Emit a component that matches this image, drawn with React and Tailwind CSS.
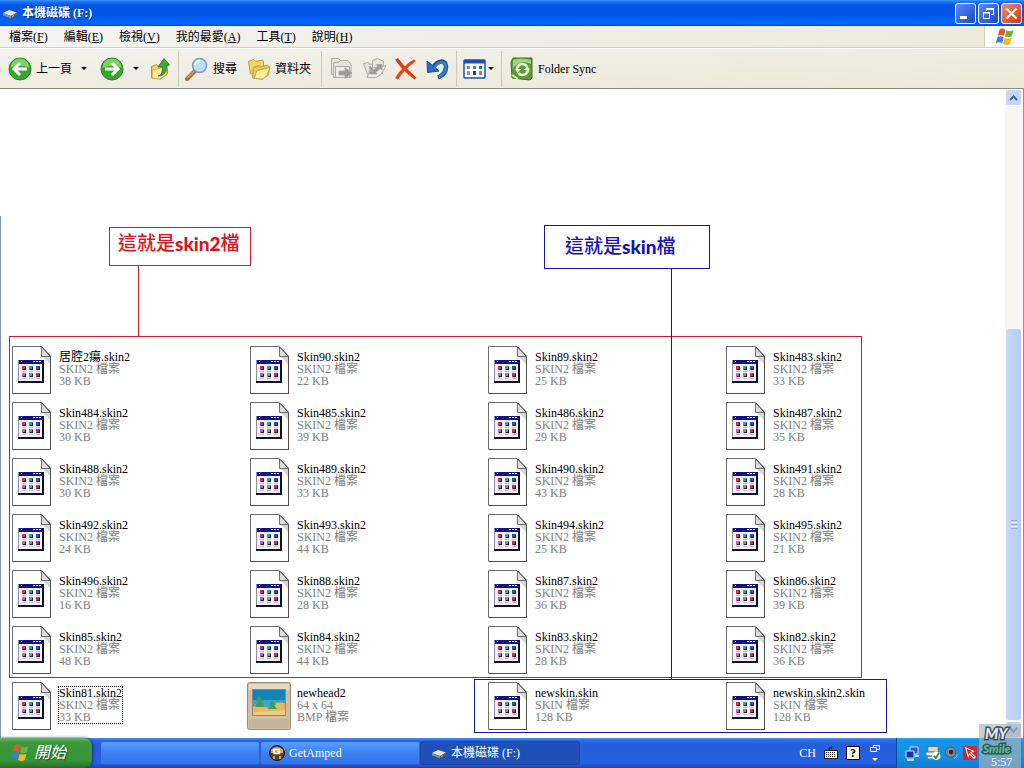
import { Fragment } from 'react';

const menus = [
  { label: '檔案', hotkey: 'F' },
  { label: '編輯', hotkey: 'E' },
  { label: '檢視', hotkey: 'V' },
  { label: '我的最愛', hotkey: 'A' },
  { label: '工具', hotkey: 'T' },
  { label: '說明', hotkey: 'H' },
];

const skin2 = (name, size) => ({ name: `${name}.skin2`, lines: ['SKIN2 檔案', `${size} KB`] });

const files = [
  skin2('居腔2瘍', 38),
  skin2('Skin90', 22),
  skin2('Skin89', 25),
  skin2('Skin483', 33),
  skin2('Skin484', 30),
  skin2('Skin485', 39),
  skin2('Skin486', 29),
  skin2('Skin487', 35),
  skin2('Skin488', 30),
  skin2('Skin489', 33),
  skin2('Skin490', 43),
  skin2('Skin491', 28),
  skin2('Skin492', 24),
  skin2('Skin493', 44),
  skin2('Skin494', 25),
  skin2('Skin495', 21),
  skin2('Skin496', 16),
  skin2('Skin88', 28),
  skin2('Skin87', 36),
  skin2('Skin86', 39),
  skin2('Skin85', 48),
  skin2('Skin84', 44),
  skin2('Skin83', 28),
  skin2('Skin82', 36),
  { ...skin2('Skin81', 33), focused: true },
  { name: 'newhead2', lines: ['64 x 64', 'BMP 檔案'], image: true },
  { name: 'newskin.skin', lines: ['SKIN 檔案', '128 KB'] },
  { name: 'newskin.skin2.skin', lines: ['SKIN 檔案', '128 KB'] },
];

const dots = [
  [10, 20, '#c03444'],
  [17, 20, '#2a9cac'],
  [24, 20, '#2c4cbc'],
  [10, 27, '#c05cc0'],
  [17, 27, '#7ca43c'],
  [24, 27, '#c03444'],
];

function FileIcon() {
  return (
    <svg width="39" height="48" viewBox="0 0 39 48" aria-hidden="true">
      <path d="M.5.5h29l9 9.5v37.500H.5z" fill="#fff" stroke="#6e6e6e" />
      <path d="M30 10.500V2l8 8.500z" fill="#dedede" />
      <path d="M29.500 1v9.500h9" fill="none" stroke="#6e6e6e" />
      <path d="M29.500 1l9 9.500v37H1" fill="none" stroke="#505050" />
      <path d="M31 11h7v7z" fill="#d6d6d6" />
      <rect x="6" y="14" width="26" height="23" fill="#101020" />
      <rect x="6" y="14" width="24" height="21" fill="#8e8ea2" />
      <rect x="7" y="18" width="23" height="17" fill="#f4f4fe" />
      <rect x="7" y="14" width="24" height="4" fill="#10107c" />
      <path d="M9 15.500h1M21 15.500h2M24 15.500h2M27 15.500h2" stroke="#fff" />
      {dots.map(([x, y, color]) => (
        <Fragment key={`${x}-${y}`}>
          <rect x={x} y={y} width="4" height="4" fill={color} />
          <path d={`M${x + 3.5} ${y + 1}v3M${x + 1} ${y + 3.5}h2`} stroke="#181848" />
          <path d={`M${x} ${y + 5.5}h4`} stroke="#c4b4cc" />
        </Fragment>
      ))}
    </svg>
  );
}

function ImageIcon() {
  return (
    <svg width="44" height="48" viewBox="0 0 44 48" aria-hidden="true">
      <rect x=".5" y=".5" width="43" height="47" rx="2" fill="#cfc0aa" stroke="#9a8a74" />
      <path d="M2 2h40v6H2z" fill="#e2d8c6" />
      <path d="M2 37h40v9H2z" fill="#c4b49c" />
      <rect x="5" y="7" width="34" height="27" fill="#1482b8" />
      <path d="M5 18h34v10H5z" fill="#3aa6c4" />
      <path d="M5 25c7-3 11-2 16 1 6-5 12-7 18-4v12H5z" fill="#e8b85a" />
      <path d="M5 31c10-3 20 0 34-4v7H5z" fill="#f2cc7c" />
      <path d="M12 13l4 6h-2l4 6H8l3-6H9zM25 18l4 5h-2l3 4h-9l3-4h-2z" fill="#3c9c62" />
      <path d="M5.500 7.500h33v26h-33z" fill="none" stroke="#8a8a78" />
    </svg>
  );
}

function DriveIcon() {
  return (
    <svg width="16" height="16" viewBox="0 0 16 16" aria-hidden="true">
      <path d="M1 8l6-3 8 2.500-6 3.500z" fill="#e6e6ea" />
      <path d="M1 8l8 3v2.500L1 10.500z" fill="#8c8c94" />
      <path d="M9 11l6-3.500V10l-6 3.500z" fill="#5c5c66" />
      <path d="M10 11.500l2-1" stroke="#7be07b" />
    </svg>
  );
}

function WindowsFlag({ size }) {
  return (
    <svg width={size} height={size} viewBox="0 0 20 20" aria-hidden="true">
      <path d="M4.500 2.500c2-1.300 4-1.200 6 .2L9 9c-2-1.300-4-1.300-6.200-.2z" fill="#e8552c" />
      <path d="M11.500 3.300c2.200 1.200 4.300 1.200 7-.3L16.800 9.300c-2.500 1.300-4.700 1.300-6.800.2z" fill="#6cb33c" />
      <path d="M2.500 10c2-1.200 4.200-1.100 6.200.2L7.200 16.400C5.200 15 3 15 .8 16.200z" fill="#3c7ce0" />
      <path d="M9.700 10.700c2 1.200 4.300 1.200 6.800 0L14.800 17c-2.500 1.300-4.600 1.200-6.700 0z" fill="#f4b81c" />
    </svg>
  );
}

function ArrowCircle({ back }) {
  return (
    <svg width="24" height="24" viewBox="0 0 24 24" aria-hidden="true">
      <circle cx="12" cy="12" r="11" fill="#3aa52c" stroke="#2c8422" />
      <path d="M2.500 11a9.500 9.500 0 0 1 19 0c-5-3-13-3-19 0z" fill="#7ed066" />
      <path
        d={back ? 'M19 12H7M12 6l-6 6 6 6' : 'M5 12h12M12 6l6 6-6 6'}
        fill="none"
        stroke="#fff"
        strokeWidth="3"
      />
    </svg>
  );
}

function UpFolderIcon() {
  return (
    <svg width="20" height="24" viewBox="0 0 20 24" aria-hidden="true">
      <path d="M1.500 9.500l5-2 2 2 7-2.500 2 1v9l-7 5-9-1z" fill="#f2d264" stroke="#b8922c" />
      <path d="M3 13l6-1.500 9-3-2 9-6 4.500-8-1z" fill="#fbeaa0" stroke="#c8a23c" strokeWidth=".7" />
      <path d="M8 19c4-1 4.500-5 4.500-9H8l6-8.500 5.500 6.500-3 .6c.3 6-2 10.400-8.500 10.400z" fill="#44a83c" stroke="#1f6e1c" strokeWidth=".8" />
    </svg>
  );
}

function SearchIcon() {
  return (
    <svg width="24" height="24" viewBox="0 0 24 24" aria-hidden="true">
      <path d="M9.500 14.500L2 22" stroke="#a86c3c" strokeWidth="4" strokeLinecap="round" />
      <path d="M9 14.500L2.500 21" stroke="#d8a070" strokeWidth="1.500" />
      <circle cx="14.500" cy="8.500" r="7" fill="#bfe0fa" stroke="#7a9cc8" strokeWidth="1.500" />
      <path d="M10 8a5 5 0 0 1 5-4.500" fill="none" stroke="#fff" strokeWidth="2" />
    </svg>
  );
}

function FoldersIcon() {
  return (
    <svg width="24" height="24" viewBox="0 0 24 24" aria-hidden="true">
      <path d="M1.500 4.500l5-2 2 2 7-1.500 1 2v9l-13 3z" fill="#f4d468" stroke="#c09a34" />
      <path d="M6.500 10.500l5-2 2 1.500 7-2 2 2-1 8-6 4-10-1z" fill="#f0c850" stroke="#c09a34" />
      <path d="M7 21.500l3-8 13-3-3 8-4 3.500z" fill="#fdeea4" stroke="#c8a23c" />
    </svg>
  );
}

function MoveIcon() {
  return (
    <svg width="24" height="24" viewBox="0 0 24 24" fill="#e6e5dc" stroke="#acaca4" aria-hidden="true">
      <path d="M1.500 1.500h7l3 3v13h-10z" />
      <path d="M3.500 5.500h5l1.500-2h8l3 4v13h-17.500z" />
      <path d="M5.500 9.500h14v11h-14z" fill="#f0efe8" />
      <path d="M9 14h6v-3.500l7 5.500-7 5.500V18H9z" fill="#9c9c94" />
    </svg>
  );
}

function CopyIcon() {
  return (
    <svg width="24" height="24" viewBox="0 0 24 24" fill="#e6e5dc" stroke="#acaca4" aria-hidden="true">
      <path d="M1.500 6.500l5-1 1 2 4-1v10l-6 1z" />
      <path d="M10.500 3.500l5-2 6 3-1 12h-10z" />
      <path d="M5 20.500l4-9 15-3-5 9-5 3z" fill="#f0efe8" />
      <path d="M8 9l4 4 4-4-2-1.500h6V13l-2-1.500-4 4 1 1.500H8l-1-3 3 .5L7 11z" fill="#9c9c94" />
    </svg>
  );
}

function DeleteIcon() {
  return (
    <svg width="24" height="24" viewBox="0 0 24 24" aria-hidden="true">
      <path d="M1 2.500L4 1c5 7 11 13 18.500 19.500l-2 2C12 16 6 10 1 2.500z" fill="#e03c14" />
      <path d="M19.500 2.500L22 4C14 10 8 16 4 22.500L1 21C6 13 12 7 19.500 2.500z" fill="#e8481c" />
    </svg>
  );
}

function UndoIcon() {
  return (
    <svg width="24" height="24" viewBox="0 0 24 24" aria-hidden="true">
      <path d="M7 11C11 3 20 2.500 20 9.500c0 5-3 9-8 11" fill="none" stroke="#164c9c" strokeWidth="4.500" />
      <path d="M1 4l.5 11.500 11.500-1.500-4-3.500z" fill="#2c6cc4" stroke="#164c9c" />
      <path d="M8 11C12 4 20 3.500 20 9.500c0 4.500-3 8.500-7.500 10.500" fill="none" stroke="#3c80d4" strokeWidth="2.500" />
    </svg>
  );
}

function ViewsIcon() {
  return (
    <svg width="24" height="24" viewBox="0 0 24 24" aria-hidden="true">
      <rect x="1" y="3" width="21" height="18" rx="1" fill="#fff" stroke="#1c50b0" strokeWidth="1.500" />
      <path d="M1 3h21v3.500H1z" fill="#1c50b0" />
      <path d="M4 9h3v3H4zM16 14h3v4h-3z" fill="#7c8ca8" />
      <path d="M10 9h3v3h-3z" fill="#4c7cd0" />
      <path d="M16 9h3v3h-3z" fill="#2c8c3c" />
      <path d="M4 14h3v4H4z" fill="#c87c7c" />
      <path d="M10 14h3v4h-3z" fill="#1c3c8c" />
    </svg>
  );
}

function SyncIcon() {
  return (
    <svg width="24" height="24" viewBox="0 0 24 24" aria-hidden="true">
      <path d="M3 1h19v20l-2 2-18-2-1-16z" fill="#5c9c34" stroke="#3c7420" />
      <path d="M3 3c6-2 12-1 18 0v4C15 4 8 5 3 11z" fill="#a8d088" />
      <circle cx="12.500" cy="12.500" r="5.500" fill="none" stroke="#f0f8e4" strokeWidth="2.500" strokeDasharray="13 4.300" />
      <path d="M5 12h6l-3.500 4zM20 13h-6l3.500-4z" fill="#f0f8e4" />
      <path d="M2 18l6 4" stroke="#d8ecc4" strokeWidth="2" />
    </svg>
  );
}

function DownArrow({ label }) {
  return (
    <button type="button" aria-label={label} className="flex w-2 justify-center">
      <svg width="6" height="3" viewBox="0 0 6 3" aria-hidden="true">
        <path d="M0 0h6L3 3z" fill="#000" />
      </svg>
    </button>
  );
}

function Separator() {
  return <div className="h-9 w-px bg-[#cbc8b8]" />;
}

function TitleBar() {
  return (
    <header className="flex h-[26px] shrink-0 items-center gap-1 bg-[linear-gradient(180deg,#3c96ff_0%,#1470f4_8%,#0054e4_22%,#0056e8_55%,#0066ff_85%,#0060f4_94%,#0048c8_100%)] px-0.5 text-white">
      <DriveIcon />
      <h1 className="flex-1 text-xs font-bold [text-shadow:1px_1px_0_#003090]">本機磁碟 (F:)</h1>
      <div className="flex gap-0.5">
        <button
          type="button"
          aria-label="最小化"
          className="flex size-[21px] items-center justify-center rounded-[3px] border border-white bg-linear-to-br from-[#5c8cf4] to-[#1c44c8]"
        >
          <svg width="13" height="13" aria-hidden="true">
            <path d="M1 9h7v3H1z" fill="#fff" />
          </svg>
        </button>
        <button
          type="button"
          aria-label="還原"
          className="flex size-[21px] items-center justify-center rounded-[3px] border border-white bg-linear-to-br from-[#5c8cf4] to-[#1c44c8]"
        >
          <svg width="13" height="13" fill="none" stroke="#fff" aria-hidden="true">
            <path d="M4.500 4V1.500h7v6H9" />
            <path d="M4 2h8" strokeWidth="2" />
            <path d="M1.500 5.500h6v6h-6zM1 6h7" />
          </svg>
        </button>
        <button
          type="button"
          aria-label="關閉"
          className="flex size-[21px] items-center justify-center rounded-[3px] border border-white bg-linear-to-br from-[#f08c6c] to-[#c83410]"
        >
          <svg width="13" height="13" aria-hidden="true">
            <path d="M1.500 1.500l10 10M11.500 1.500l-10 10" stroke="#fff" strokeWidth="2.200" />
          </svg>
        </button>
      </div>
    </header>
  );
}

function MenuBar() {
  return (
    <nav className="flex h-[22px] shrink-0 border-b border-[#d4d0c0] bg-linear-to-r from-[#f4f4f2] to-[#ece9d8] pl-px">
      {menus.map((menu) => (
        <button key={menu.hotkey} type="button" className="px-2">
          {menu.label}(<u>{menu.hotkey}</u>)
        </button>
      ))}
      <div className="ml-auto flex w-10 items-center justify-center border-l border-[#d4d0c0] bg-white">
        <WindowsFlag size={20} />
      </div>
    </nav>
  );
}

function Toolbar() {
  return (
    <div className="flex h-10 shrink-0 items-center border-t border-white bg-linear-to-br from-[#f3f2ee] to-[#ebe8d6] pl-2">
      <button type="button" className="flex items-center gap-1">
        <ArrowCircle back />
        上一頁
      </button>
      <div className="ml-2 flex">
        <DownArrow label="上一頁清單" />
      </div>
      <button type="button" aria-label="下一頁" className="ml-3">
        <ArrowCircle />
      </button>
      <div className="ml-2 flex">
        <DownArrow label="下一頁清單" />
      </div>
      <button type="button" aria-label="往上" className="mr-2 ml-2.5">
        <UpFolderIcon />
      </button>
      <Separator />
      <button type="button" className="ml-1.5 flex items-center gap-1">
        <SearchIcon />
        搜尋
      </button>
      <button type="button" className="mx-2.5 flex items-center gap-1">
        <FoldersIcon />
        資料夾
      </button>
      <Separator />
      <div className="mr-1.5 ml-2 flex gap-2">
        <button type="button" aria-label="移至">
          <MoveIcon />
        </button>
        <button type="button" aria-label="複製到">
          <CopyIcon />
        </button>
        <button type="button" aria-label="刪除">
          <DeleteIcon />
        </button>
        <button type="button" aria-label="復原">
          <UndoIcon />
        </button>
      </div>
      <Separator />
      <div className="mx-1.5 flex items-center">
        <button type="button" aria-label="檢視">
          <ViewsIcon />
        </button>
        <DownArrow label="檢視清單" />
      </div>
      <Separator />
      <button type="button" className="ml-2 flex items-center gap-1">
        <SyncIcon />
        Folder Sync
      </button>
    </div>
  );
}

function FileItem({ file }) {
  return (
    <li className="flex h-14 items-center gap-1">
      <div className="flex w-12 justify-center">{file.image ? <ImageIcon /> : <FileIcon />}</div>
      <div className="pb-0.5">
        <div className={file.focused ? 'outline outline-dotted outline-black' : ''}>
          <p className="leading-3 text-black">{file.name}</p>
          {file.lines.map((line) => (
            <p key={line} className="leading-3 text-[#808080]">
              {line}
            </p>
          ))}
        </div>
      </div>
    </li>
  );
}

// Callouts drawn over the file list
function Annotations() {
  return (
    <>
      <div className="absolute top-[11px] left-[108px] flex h-[39px] w-[142px] items-center border border-[#d01c2c] pb-1.5 pl-2 text-[19px] font-medium text-[#dc141c]">
        這就是<b className="font-[Lato] font-black">skin2</b>檔
      </div>
      <div className="absolute top-[50px] left-[137px] h-[70px] w-px bg-[#d01c2c]" />
      <div className="absolute top-[120px] left-[8px] h-[342px] w-[853px] border border-[#d01c2c]" />
      <div className="absolute top-[9px] left-[543px] flex h-[44px] w-[166px] items-center border border-[#1818a8] pl-5 text-[19px] font-medium text-[#1414b4]">
        這就是<b className="font-[Lato] font-black">skin</b>檔
      </div>
      <div className="absolute top-[53px] left-[670px] h-[410px] w-px bg-[#1818a8]" />
      <div className="absolute top-[463px] left-[473px] h-[54px] w-[413px] border border-[#1818a8]" />
    </>
  );
}

function ScrollBar() {
  return (
    <div className="mr-px flex w-[17px] flex-col bg-[#f6f5ef]">
      <button
        type="button"
        aria-label="向上捲動"
        className="flex h-[17px] items-center justify-center rounded-[3px] border border-white bg-[#c6d6fb]"
      >
        <svg width="9" height="6" aria-hidden="true">
          <path d="M1 5l3.500-3.500L8 5" fill="none" stroke="#4d6185" strokeWidth="2" />
        </svg>
      </button>
      <div className="flex-[222]" />
      <div className="flex flex-[390] flex-col items-center justify-center gap-px rounded-[3px] border border-white bg-linear-to-r from-[#c8d8fc] to-[#b8ccf8]">
        <div className="h-px w-1.5 bg-[#8cacea]" />
        <div className="h-px w-1.5 bg-[#eef4fe]" />
        <div className="h-px w-1.5 bg-[#8cacea]" />
        <div className="h-px w-1.5 bg-[#eef4fe]" />
        <div className="h-px w-1.5 bg-[#8cacea]" />
      </div>
      <button
        type="button"
        aria-label="向下捲動"
        className="flex h-[17px] items-center justify-center rounded-[3px] border border-white bg-[#c6d6fb]"
      >
        <svg width="9" height="6" aria-hidden="true">
          <path d="M1 1l3.500 3.500L8 1" fill="none" stroke="#4d6185" strokeWidth="2" />
        </svg>
      </button>
    </div>
  );
}

function GetAmpedIcon() {
  return (
    <svg width="16" height="16" viewBox="0 0 16 16" aria-hidden="true">
      <circle cx="8" cy="8" r="7.500" fill="#5c4420" stroke="#1c1408" />
      <path d="M2 5c3-4 9-4 12 0v3H2z" fill="#c8a870" />
      <path d="M11 4.500H5v4h5.500v-2H8" fill="none" stroke="#fff" strokeWidth="1.500" />
      <path d="M4 11h2v3H4zM10 11h2v3h-2z" fill="#c8a870" />
    </svg>
  );
}

function Tray() {
  return (
    <div className="flex w-32 items-center gap-1 border-l border-[#0c4c9c] bg-[linear-gradient(180deg,#28a8f4_0%,#1494ec_10%,#1290e6_60%,#0e7cd0_100%)] pl-2">
      <svg width="16" height="16" viewBox="0 0 16 16" aria-hidden="true">
        <path d="M5 2h8v7H5z" fill="#3454b4" stroke="#d4dcf4" />
        <path d="M1 6h8v7H1z" fill="#1c3494" stroke="#d4dcf4" />
        <path d="M2 15h7M10 11h4" stroke="#c8d0e4" strokeWidth="2" />
      </svg>
      <svg width="16" height="16" viewBox="0 0 17 16" aria-hidden="true">
        <path d="M3 1h11v6H3z" fill="#d8d8d8" stroke="#6c6c6c" />
        <path d="M1 7h10v4H1z" fill="#f4f4f4" stroke="#6c6c6c" />
        <path d="M3 13h6" stroke="#e8e8e8" strokeWidth="2" />
        <circle cx="12" cy="11" r="4.500" fill="#fff" />
        <path d="M9.500 11l2 2.500 3.500-5.500" fill="none" stroke="#249c24" strokeWidth="2" />
      </svg>
      <svg width="14" height="16" viewBox="0 0 15 16" aria-hidden="true">
        <circle cx="6" cy="7" r="5.500" fill="#8c8c8c" stroke="#4c4c4c" />
        <circle cx="6.500" cy="7" r="2.500" fill="#2c2c2c" />
        <path d="M10 14c2-1 3-3 3-5" fill="none" stroke="#9ccaf4" />
      </svg>
      <svg width="14" height="16" viewBox="0 0 16 16" aria-hidden="true">
        <rect width="16" height="16" fill="#d42428" />
        <path d="M3 2l9 4-3 1.500 5 5-1.500 1.500-5-5L6 12z" fill="none" stroke="#fff" strokeWidth="1.200" />
      </svg>
      <time className="relative z-10 ml-2.5 self-end leading-3 text-white">5:57</time>
    </div>
  );
}

function Watermark() {
  return (
    <svg
      className="absolute right-[3px] bottom-0 overflow-visible"
      width="42"
      height="44"
      viewBox="0 0 42 44"
      aria-hidden="true"
    >
      <rect width="42" height="44" fill="#aab4b8" fillOpacity=".65" />
      <g fontFamily="Lato, sans-serif" fontWeight="900" fontStyle="italic" strokeWidth="3" paintOrder="stroke">
        <text x="6" y="15" fontSize="15" fill="#dce8ee" stroke="#44525a">
          MY
        </text>
        <text x="4" y="29" fontSize="12" fill="#68b898" stroke="#285c54">
          Smile
        </text>
      </g>
    </svg>
  );
}

function TaskBar() {
  return (
    <footer className="flex h-[30px] shrink-0 bg-[linear-gradient(180deg,#4890f4_0%,#2c6ce8_8%,#245edb_20%,#2460e0_85%,#1a44b0_100%)] text-white">
      <button
        type="button"
        className="flex w-[92px] items-center gap-1 rounded-r-lg bg-[linear-gradient(180deg,#6cb46c_0%,#3c983c_15%,#389438_75%,#246c24_100%)] pl-2.5 text-base italic shadow-[1px_0_3px_#10388c] [text-shadow:1px_1px_1px_#1c4c1c]"
      >
        <WindowsFlag size={20} />
        開始
      </button>
      <div className="flex flex-1 py-[3px] pl-2">
        <button
          type="button"
          aria-label="工作"
          className="w-40 rounded-[3px] border border-[#2c60d0] bg-linear-to-b from-[#5c9cfc] via-[#3c80f4] to-[#3474e8]"
        />
        <button
          type="button"
          className="flex w-40 items-center gap-1 rounded-[3px] border border-[#2c60d0] bg-linear-to-b from-[#5c9cfc] via-[#3c80f4] to-[#3474e8] pl-2"
        >
          <GetAmpedIcon />
          GetAmped
        </button>
        <button
          type="button"
          className="flex w-40 items-center gap-1 rounded-[3px] border border-[#1848a4] bg-[#1e50b8] pl-2.5"
        >
          <DriveIcon />
          本機磁碟 (F:)
        </button>
      </div>
      <div className="flex items-center gap-2 pr-3.5">
        <button type="button">CH</button>
        <svg width="14" height="14" viewBox="0 0 14 14" aria-hidden="true">
          <path d="M5 4V2h3V0" fill="none" stroke="#1c1c1c" />
          <rect x=".5" y="4.500" width="13" height="8" fill="#f4f0dc" stroke="#1c1c1c" />
          <path d="M2 6.500h10M2 8.500h10M2 10.500h10" stroke="#1c1c1c" strokeDasharray="1 1" />
        </svg>
        <button
          type="button"
          aria-label="說明"
          className="flex size-3.5 items-center justify-center border border-black bg-[#fcfcdc] font-bold text-black"
        >
          ?
        </button>
        <svg width="14" height="18" viewBox="0 0 14 18" fill="none" stroke="#fff" aria-hidden="true">
          <path d="M5.500 3V1.500h6v4H9M2.500 3.500h6v4h-6z" />
          <path d="M4 14h6l-3 3z" fill="#fff" stroke="none" />
        </svg>
      </div>
      <Tray />
    </footer>
  );
}

function App() {
  return (
    <div className="relative flex h-screen flex-col overflow-hidden bg-white font-['Liberation_Serif','Noto_Sans_CJK_TC',serif] text-xs text-black">
      <TitleBar />
      <MenuBar />
      <Toolbar />
      <main className="flex min-h-0 flex-1 border-t border-r border-t-[#8c8c84] border-r-[#8097a8] bg-white">
        <div className="flex min-w-0 flex-1 flex-col justify-end overflow-hidden">
          <section className="relative border-l border-[#8097a8] pt-[126px] pb-1 pl-1.5">
            <ul className="grid grid-cols-[repeat(4,238px)]">
              {files.map((file) => (
                <FileItem key={file.name} file={file} />
              ))}
            </ul>
            <Annotations />
          </section>
        </div>
        <ScrollBar />
      </main>
      <TaskBar />
      <Watermark />
    </div>
  );
}

export default App;
